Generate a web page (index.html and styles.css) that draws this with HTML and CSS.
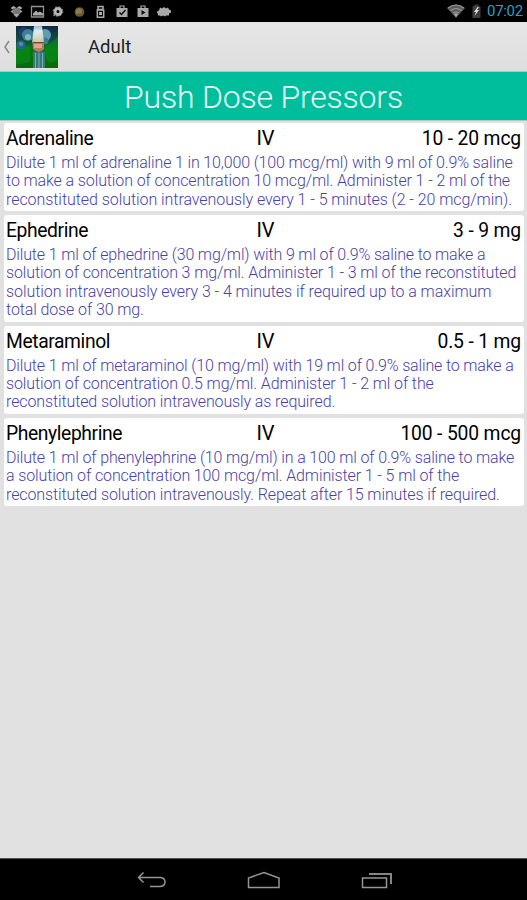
FILE: index.html
```html
<!DOCTYPE html>
<html lang="en">
<head>
    <meta charset="UTF-8"/>
    <title>Push Dose Pressors</title>
    <link rel="stylesheet" href="styles.css">
</head>
<body>
<div class="status-bar">
    <svg class="notifications" width="180" height="22" viewBox="0 0 180 22">
        <!-- dropbox -->
        <path fill="#aaa" d="M13.500 6l3 2-3 2-3-2zM19.500 6l3 2-3 2-3-2zM13.500 9.500l3 2-3 2-3-2zM19.500 9.500l3 2-3 2-3-2zM16.500 12.500l3 2-3 3-3-3z"/>
        <path fill="#777" d="M13 8h7v6h-7z"/>
        <!-- picture -->
        <path fill="none" stroke="#929292" stroke-width="1.300" d="M31.500 6.500h12v10.500h-12z"/>
        <path fill="#aaa" d="M33 15.500v-2l3-3 2 2 2-1 3 2v2z"/>
        <!-- settings -->
        <circle cx="58" cy="11.500" r="3" fill="none" stroke="#b5b5b5" stroke-width="3"/>
        <circle cx="58" cy="11.500" r="4.800" fill="none" stroke="#999" stroke-width="1" stroke-dasharray="1.900 1.900"/>
        <path stroke="#999" stroke-width="1.500" d="M53.500 16l2-2"/>
        <!-- globe -->
        <circle cx="79.500" cy="12" r="4.800" fill="#655c3c"/>
        <path fill="#84843f" d="M76 10l3-2 3 2-2 3-4 1z"/>
        <circle cx="80" cy="12" r="1.700" fill="#b26b3c"/>
        <!-- usb -->
        <path fill="none" stroke="#aaa" stroke-width="1.500" d="M98 6.500h5v3h-5zM97.300 10h6.400v7.200h-6.400z"/>
        <path fill="#aaa" d="M99 12h3v3h-3z"/>
        <!-- bags -->
        <path fill="#aaa" d="M116.500 8h11v9h-11zM137.500 8h11v9h-11z"/>
        <path fill="none" stroke="#aaa" stroke-width="1.200" d="M120 8V6h4v2M141 8V6h4v2"/>
        <path fill="none" stroke="#111" stroke-width="1.500" d="M119.500 12.500l2 2 4-4.500"/>
        <path fill="#111" d="M141.500 10l4 2.500-4 2.500z"/>
        <!-- android -->
        <path fill="#aaa" d="M157 11.500l2-1 1-3 2 1 2-1.500 2 1.500 2-1 1 2 2 1v2l-2 1v2h-3l-1 1-2-1-2 1-1-1h-2v-2l-1-.5z"/>
    </svg>
    <svg class="system" width="36" height="22" viewBox="0 0 36 22">
        <path fill="#5c5c5c" d="M0 8Q8.800 1 18 8l-9 10z"/>
        <path fill="none" stroke="#999" stroke-width="1.200" d="M1 8Q9 2 17 8M3.500 10.500Q9 6.500 14.500 10.500M6 13q3-2 6 0"/>
        <path fill="#aaa" d="M7 14q2-1.500 4 0l-2 3z"/>
        <path fill="#3e3e3e" d="M25.500 6h2V4.500h4V6h2v12h-8z"/>
        <path fill="#ddd" d="M30.500 7l-3.500 5h2l-1.500 4 4.500-6h-2l2-3z"/>
    </svg>
    <span class="clock">07:02</span>
</div>

<header class="action-bar">
    <svg width="8" height="14" viewBox="0 0 8 14">
        <path fill="none" stroke="#888" stroke-width="1.500" d="M6 1L2 7l4 6"/>
    </svg>
    <svg class="app-icon" width="42" height="42" viewBox="0 0 42 42">
        <defs>
            <linearGradient id="green" x1="0" y1="0" x2="0" y2="1">
                <stop offset="0" stop-color="#102848"/>
                <stop offset=".35" stop-color="#124f3c"/>
                <stop offset=".55" stop-color="#08780e"/>
                <stop offset="1" stop-color="#066b0c"/>
            </linearGradient>
            <linearGradient id="beam" x1="0" y1="0" x2="0" y2="1">
                <stop offset="0" stop-color="#91bbd9"/>
                <stop offset=".3" stop-color="#e3edf0"/>
                <stop offset="1" stop-color="#c6c6a0"/>
            </linearGradient>
        </defs>
        <path fill="url(#green)" d="M0 0h42v42H0z"/>
        <path fill="#079019" d="M29 20q8-3 13-10v23q-8 7-12 0zM0 25l14-6v17l-14 3z" opacity=".55"/>
        <circle cx="7" cy="6" r="4.500" fill="#1c426a"/>
        <circle cx="12" cy="9" r="6" fill="#3d7f9d"/>
        <circle cx="5" cy="19" r="4.500" fill="#27638a"/>
        <circle cx="29" cy="9" r="6" fill="#5d9fb2"/>
        <circle cx="29" cy="15" r="3.500" fill="#3a7c94"/>
        <circle cx="12" cy="11" r="3" fill="#85b7bd"/>
        <circle cx="5" cy="18" r="2" fill="#5590ab"/>
        <path fill="#377b75" d="M17 26h12v16H17z"/>
        <path stroke="#76aeb8" stroke-width="1" d="M19.500 27v15M23 27v15M26.500 27v15"/>
        <path fill="url(#beam)" d="M18 0h8l2 17H16z"/>
        <path fill="#b97964" d="M16.500 16h11.500v7q-5 6-11 0z"/>
        <path fill="#d9a58d" d="M18 18h8v4h-8z"/>
        <path stroke="#6b4b3c" d="M16.500 16.500h11.500"/>
    </svg>
    <span class="screen-name">Adult</span>
</header>

<h1 class="title">Push Dose Pressors</h1>

<main class="drug-list">
    <section class="drug">
        <div class="drug-head">
            <span class="name">Adrenaline</span>
            <span class="route">IV</span>
            <span class="dose">10 - 20 mcg</span>
        </div>
        <p>Dilute 1 ml of adrenaline 1 in 10,000 (100 mcg/ml) with 9 ml of 0.9% saline<br>
            to make a solution of concentration 10 mcg/ml. Administer 1 - 2 ml of the<br>
            <span class="loose">reconstituted solution intravenously every 1 - 5 minutes (2 - 20 mcg/min).</span></p>
    </section>
    <section class="drug">
        <div class="drug-head">
            <span class="name">Ephedrine</span>
            <span class="route">IV</span>
            <span class="dose">3 - 9 mg</span>
        </div>
        <p>Dilute 1 ml of ephedrine (30 mg/ml) with 9 ml of 0.9% saline to make a<br>
            solution of concentration 3 mg/ml. Administer 1 - 3 ml of the reconstituted<br>
            <span class="loose">solution intravenously every 3 - 4 minutes if required up to a maximum</span><br>
            total dose of 30 mg.</p>
    </section>
    <section class="drug">
        <div class="drug-head">
            <span class="name">Metaraminol</span>
            <span class="route">IV</span>
            <span class="dose">0.5 - 1 mg</span>
        </div>
        <p>Dilute 1 ml of metaraminol (10 mg/ml) with 19 ml of 0.9% saline to make a<br>
            solution of concentration 0.5 mg/ml. Administer 1 - 2 ml of the<br>
            reconstituted solution intravenously as required.</p>
    </section>
    <section class="drug">
        <div class="drug-head">
            <span class="name">Phenylephrine</span>
            <span class="route">IV</span>
            <span class="dose">100 - 500 mcg</span>
        </div>
        <p>Dilute 1 ml of phenylephrine (10 mg/ml) in a 100 ml of 0.9% saline to make<br>
            a solution of concentration 100 mcg/ml. Administer 1 - 5 ml of the<br>
            reconstituted solution intravenously. Repeat after 15 minutes if required.</p>
    </section>
</main>

<nav class="nav-bar">
    <svg width="30" height="18" viewBox="0 0 30 18">
        <path fill="none" stroke="#959595" stroke-width="1.500" d="M6.500 1.500L1.500 6.500l5 5M1.500 6.500h22q4.500.5 4.500 4.500t-4.500 4.500H13"/>
    </svg>
    <svg width="34" height="18" viewBox="0 0 34 18">
        <path fill="none" stroke="#959595" stroke-width="1.500" d="M1.500 16.500V7L17 1.500 32 7v9.500z"/>
    </svg>
    <svg width="32" height="18" viewBox="0 0 32 18">
        <path fill="none" stroke="#959595" stroke-width="1.500" d="M1.500 7h24v9.500h-24z"/>
        <path fill="none" stroke="#858585" stroke-width="2" d="M8 3h22v10"/>
    </svg>
</nav>
</body>
</html>
```
FILE: styles.css
```css
body {
    margin: 0;
    height: 900px;
    display: flex;
    flex-direction: column;
    overflow: hidden;
    background: #e1e1e1;
    font-family: Roboto, sans-serif;
}

svg {
    display: block;
    flex: none;
}

.status-bar {
    display: flex;
    align-items: center;
    height: 22px;
    padding-right: 4px;
    background: #000;
}

.system {
    margin-left: auto;
}

.clock {
    width: 36px;
    margin-left: 4px;
    font-size: 15px;
    line-height: 23px;
    letter-spacing: -0.3px;
    white-space: nowrap;
    color: #2f9fc9;
}

.action-bar {
    display: flex;
    align-items: center;
    box-sizing: border-box;
    height: 50px;
    padding-left: 3px;
    background: linear-gradient(#e6e6e6, #dedede);
    border-bottom: 1px solid #b5c4c0;
}

.app-icon {
    margin-left: 5px;
}

.screen-name {
    margin-left: 30px;
    padding-top: 1px;
    font-size: 18.5px;
    color: #222;
}

.title {
    margin: 0;
    height: 48px;
    border-bottom: 1px solid #a9cdc3;
    background: #00bd9c;
    color: #e9fff9;
    font-size: 32px;
    font-weight: 300;
    line-height: 50px;
    letter-spacing: -0.2px;
    text-align: center;
}

.drug-list {
    display: flex;
    flex-direction: column;
    gap: 3.5px;
    padding: 1.7px 3px 0 4px;
}

.drug {
    padding: 2px 3px 2.5px 2px;
    border-radius: 3px;
    background: #fff;
}

.drug-head {
    display: grid;
    grid-template-columns: 1fr auto 1fr;
    height: 29px;
    font-size: 20px;
    line-height: 27px;
    color: #000;
}

.name {
    font-size: 19.3px;
    letter-spacing: -0.4px;
}

.route {
    padding-left: 4px;
}

.dose {
    font-size: 19.3px;
    letter-spacing: -0.15px;
    text-align: right;
}

.drug p {
    margin: 0;
    font-size: 16px;
    font-weight: 300;
    line-height: 18.4px;
    letter-spacing: -0.115px;
    white-space: nowrap;
    color: #4a3fa5;
}

.drug p::first-line {
    letter-spacing: -0.15px;
}

.drug p .loose {
    letter-spacing: -0.06px;
}

.nav-bar {
    display: flex;
    justify-content: center;
    align-items: center;
    gap: 80px;
    height: 41px;
    margin-top: auto;
    padding-left: 2px;
    border-top: 1px solid #555;
    background: #000;
}
```
